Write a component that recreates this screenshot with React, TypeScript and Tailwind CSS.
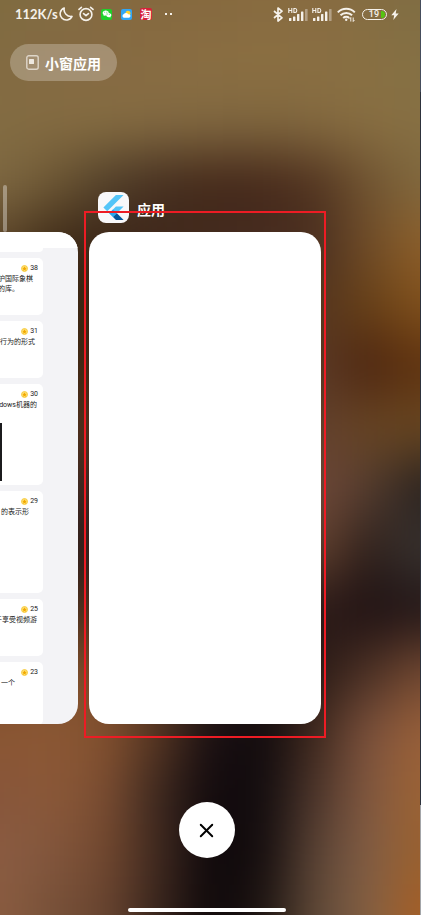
import React from "react";
import { X } from "lucide-react";
import { AiFillWechat } from "react-icons/ai";

const wallpaper: string[][] = [
  ["#7f6b40", "#826b42", "#846a40", "#85693f", "#86693f", "#876b40", "#886b41", "#856c42", "#7f6d43"],
  ["#836b42", "#846a43", "#866a43", "#886c42", "#8a6e42", "#8b6f42", "#8a6f42", "#887042", "#857044"],
  ["#836c42", "#846c42", "#866d42", "#846b42", "#826941", "#80673f", "#846a40", "#886e42", "#877043"],
  ["#7e6842", "#6d5734", "#52402a", "#452f20", "#432819", "#45281a", "#51331f", "#6f5331", "#80683e"],
  ["#5c4529", "#3e2b18", "#3c2618", "#40281b", "#432b1e", "#462c20", "#4a2f20", "#6f4c28", "#8d5f2a"],
  ["#4a3018", "#3c2612", "#38220f", "#3c261a", "#442c20", "#4c3024", "#55361f", "#674017", "#80501c"],
  ["#4a3018", "#442a14", "#3c2412", "#3c261a", "#442c20", "#503428", "#5c3a26", "#4c2510", "#5f320f"],
  ["#4a3018", "#4c2e1c", "#502f1b", "#4a2e20", "#4c3024", "#55382b", "#61402e", "#684523", "#6a4822"],
  ["#3c2820", "#3e2820", "#3c2620", "#402a20", "#4c3024", "#5c3e30", "#70493a", "#553d2f", "#28211f"],
  ["#2c1c18", "#2e1c1a", "#301e1a", "#302018", "#402a20", "#5c3e30", "#65432f", "#30211c", "#383330"],
  ["#402618", "#482c1c", "#4e301c", "#302018", "#302018", "#34201a", "#2b1a18", "#1f1113", "#221617"],
  ["#784828", "#80502e", "#774827", "#4c3020", "#302018", "#241816", "#2a1a16", "#4a3024", "#704731"],
  ["#8b5733", "#8b5834", "#84512f", "#573622", "#1a1013", "#100a0d", "#3f281d", "#7b513d", "#996039"],
  ["#87553a", "#8b5838", "#7b4d31", "#3c281f", "#120a0d", "#120c0e", "#4c352b", "#815840", "#9c6335"],
  ["#8a5c42", "#82563d", "#72482f", "#40291f", "#0e080b", "#140d0e", "#5a4335", "#815d45", "#99612f"],
  ["#8a5c40", "#765038", "#684430", "#38251d", "#0e080a", "#1e1512", "#5f4938", "#836044", "#a65f25"],
];

function Wallpaper() {
  const cw = 52.5;
  const ch = 61;
  return (
    <svg
      className="absolute inset-0 h-full w-full"
      viewBox="0 0 420 915"
      preserveAspectRatio="none"
      aria-hidden="true"
    >
      <defs>
        <filter
          id="soft"
          filterUnits="userSpaceOnUse"
          x="-120"
          y="-120"
          width="660"
          height="1155"
          colorInterpolationFilters="sRGB"
        >
          <feGaussianBlur stdDeviation="24 27" />
        </filter>
      </defs>
      <g filter="url(#soft)">
        {wallpaper.map((row, r) =>
          row.map((color, c) => {
            const x = c === 0 ? -120 : (c - 0.5) * cw;
            const y = r === 0 ? -120 : (r - 0.5) * ch;
            const right = c === row.length - 1 ? 540 : (c + 0.5) * cw + 1;
            const bottom = r === wallpaper.length - 1 ? 1035 : (r + 0.5) * ch + 1;
            return <rect key={`${r}-${c}`} x={x} y={y} width={right - x} height={bottom - y} fill={color} />;
          })
        )}
      </g>
    </svg>
  );
}

function Signal() {
  return (
    <svg className="h-[15px] w-[20px]" viewBox="0 0 20 15" fill="#f5f1ea" aria-hidden="true">
      <g fill="none" stroke="#f5f1ea" strokeWidth="1.1">
        <path d="M.8 1v5M3.8 1v5M.8 3.5h3M5.9 1.5h1.2q1.7 0 1.7 2t-1.7 2H5.9z" />
      </g>
      <rect x="1" y="11" width="2.400" height="3" rx=".6" />
      <rect x="5" y="9.500" width="2.400" height="4.500" rx=".6" />
      <rect x="9" y="7" width="2.400" height="7" rx=".6" />
      <rect x="13" y="4.500" width="2.400" height="9.500" rx=".6" />
      <rect x="17" y="2" width="2.600" height="12" rx=".6" opacity=".4" />
    </svg>
  );
}

function StatusBar() {
  return (
    <header className="flex h-7 items-center justify-between pr-[21px] pl-[15px] text-[#f5f1ea]">
      <div className="flex items-center">
        <span className="w-[41px] font-['Lato','Liberation_Sans',sans-serif] text-[13px] leading-5 font-bold whitespace-nowrap">
          112K/s
        </span>
        <svg className="ml-[3px] size-[14px]" viewBox="0 0 14 14" fill="none" stroke="currentColor" strokeWidth="1.6" strokeLinejoin="round" aria-hidden="true">
          <path d="M5.200 1A6.200 6.200 0 1 0 13 9.400 7 7 0 0 1 5.200 1z" />
        </svg>
        <svg className="ml-[5px] size-4" viewBox="0 0 16 16" fill="none" stroke="currentColor" strokeWidth="1.6" strokeLinecap="round" strokeLinejoin="round" aria-hidden="true">
          <circle cx="8" cy="8.500" r="5.900" />
          <path d="M1 3.400 3.400 1.300M15 3.400 12.600 1.300M5.600 7.600 8 9.600l2.400-2" />
        </svg>
        <span className="ml-[7px] flex size-[11px] items-center justify-center rounded-xs bg-[#1fd02a] text-white">
          <AiFillWechat size={10} />
        </span>
        <svg className="ml-[9px] size-[11px]" viewBox="0 0 11 11" aria-hidden="true">
          <rect width="11" height="11" rx="2" fill="#31a6f5" />
          <circle cx="7" cy="4.200" r="2.500" fill="#ffd22e" />
          <path d="M3 8.800a1.900 1.900 0 0 1-.1-3.700A2.500 2.500 0 0 1 7.200 5.200a1.800 1.800 0 0 1 .8 3.600z" fill="#fff" />
        </svg>
        <span className="ml-2 flex size-3 items-center justify-center rounded-xs bg-[#d6203a] font-['Noto_Sans_CJK_SC',sans-serif] text-[11px] leading-3 font-bold text-white">
          淘
        </span>
        <span className="ml-[13px] flex gap-[3px]">
          <i className="size-[2px] bg-[#f5f1ea]" />
          <i className="size-[2px] bg-[#f5f1ea]" />
        </span>
      </div>
      <div className="flex items-center">
        <svg className="h-[15px] w-[10px]" viewBox="0 0 10 15" fill="none" stroke="currentColor" strokeWidth="1.7" strokeLinejoin="round" aria-hidden="true">
          <path d="M1 4l8 6.800-4 3.200V1l4 3.200L1 11" />
        </svg>
        <span className="ml-[5px] flex gap-1">
          <Signal />
          <Signal />
        </span>
        <svg className="ml-[5px] h-[15px] w-[19px]" viewBox="0 0 19 15" fill="none" stroke="currentColor" strokeWidth="2" aria-hidden="true">
          <path d="M.8 5.400a12 12 0 0 1 17 0M3.500 8.300a8.200 8.200 0 0 1 11.600 0M6.200 11a4.400 4.400 0 0 1 6 0" />
          <circle cx="9.200" cy="12.800" r="1.200" fill="currentColor" stroke="none" />
          <path d="M13.800 14.500v-4l-1.200 1.500M16.200 10.500v4l1.200-1.500" strokeWidth="1" />
        </svg>
        <span className="ml-[6px] flex h-[11px] w-[25px] items-center justify-end gap-[2px] rounded-full border border-[#f5f1ea] pr-px">
          <span className="font-['Roboto',sans-serif] text-[9px] leading-[9px] font-medium">19</span>
          <i className="h-[7px] w-1 rounded-r-full bg-[#55c411]" />
        </span>
        <svg className="ml-1 h-[11px] w-2" viewBox="0 0 8 11" fill="currentColor" aria-hidden="true">
          <path d="M5.500 0 .3 6.200h2.900L2.300 11 7.700 4.600H4.700z" />
        </svg>
      </div>
    </header>
  );
}

const posts = [
  { stars: 38, text: "护国际象棋\n的库。", box: "h-[57px]", pad: "pr-2.5", image: false },
  { stars: 31, text: "行为的形式", box: "h-[57px]", pad: "pr-2", image: false },
  { stars: 30, text: "dows机器的", box: "h-[101px]", pad: "pr-1.5", image: true },
  { stars: 29, text: "的表示形", box: "h-[102px]", pad: "pr-3.5", image: false },
  { stars: 25, text: "于享受视频游", box: "h-[57px]", pad: "pr-1.5", image: false },
  { stars: 23, text: "一个", box: "h-[63px]", pad: "pr-7", image: false },
];

function FeedCard() {
  return (
    <article className="h-[492px] overflow-hidden rounded-r-[20px] bg-[#f3f3f6]">
      <div className="h-4 bg-white" />
      <div className="flex flex-col gap-[6px] pr-[35px]">
        <div className="h-1 rounded-br-[4px] bg-white" />
        {posts.map((p) => (
          <section key={p.stars} className={`${p.box} shrink-0 overflow-hidden rounded-r-[5px] bg-white pt-[5px] text-[#222]`}>
            <div className="flex h-[10px] items-center justify-end gap-[2px] pr-[5px] font-['Roboto',sans-serif] text-[7px] leading-[10px]">
              <svg className="size-[7px]" viewBox="0 0 7 7" aria-hidden="true">
                <circle cx="3.500" cy="3.500" r="3" fill="#ffe27a" stroke="#f5c52c" strokeWidth=".8" />
                <path d="M3.500 1.200 4.200 2.800 5.800 3 4.600 4.100 4.900 5.700 3.500 4.900 2.100 5.700 2.400 4.100 1.200 3 2.800 2.800z" fill="#f2a900" />
              </svg>
              {p.stars}
            </div>
            <div className={`${p.pad} mt-px flex justify-end`}>
              <p className="font-['Roboto','Noto_Sans_CJK_SC',sans-serif] text-[7px] leading-[10px] whitespace-pre">{p.text}</p>
            </div>
            {p.image && <div className="mt-[13px] h-[58px] w-[2px] bg-[#1b1b1d]" />}
          </section>
        ))}
      </div>
    </article>
  );
}

function FlutterIcon() {
  return (
    <span className="flex size-[31px] items-center justify-center rounded-lg bg-[#f8f8fa]">
      <svg className="size-[25px]" viewBox="0 0 24 24" aria-hidden="true">
        <path fill="#54c5f8" d="M14.314 0L2.300 12 6 15.700 21.684.013zM14.328 11.072L7.857 17.530l3.690 3.690 10.150-10.148z" />
        <path fill="#29a8ee" d="M7.857 17.530l3.690-3.680 3.690 3.680-3.690 3.690z" />
        <path fill="#01579b" d="M11.547 21.220l2.780 2.780H21.700l-6.460-6.468z" />
      </svg>
    </span>
  );
}

export default function App() {
  return (
    <div className="flex min-h-screen font-['Noto_Sans_CJK_SC',sans-serif]">
      <main className="relative min-w-0 flex-1 overflow-hidden">
        <Wallpaper />
        <div className="relative flex flex-col pb-[3px]">
          <StatusBar />
          <button
            type="button"
            className="mt-4 ml-[10px] flex h-[37px] w-[107px] items-center gap-[6px] rounded-full bg-white/25 pl-4 text-[14px] leading-5 font-bold whitespace-nowrap text-white"
          >
            <svg className="h-[15px] w-[13px]" viewBox="0 0 13 15" fill="none" aria-hidden="true">
              <rect x=".8" y=".8" width="11.400" height="13.400" rx="2" stroke="#ded6c9" strokeWidth="1.4" />
              <rect x="3" y="4" width="5" height="5" rx=".5" fill="#ede8e0" />
            </svg>
            小窗应用
          </button>

          <div className="mt-[104px] grid grid-cols-[78fr_232fr_88fr] items-end gap-x-[11px]">
            <div className="min-w-0">
              <div className="ml-[3px] h-[47px] w-1 rounded-full bg-white/35" />
              <FeedCard />
            </div>
            <div>
              <div className="mb-[9px] flex h-[31px] items-center gap-2 pl-[9px] text-[14px] leading-5 font-bold text-white">
                <FlutterIcon />
                <h1 className="pt-[2px]">应用</h1>
              </div>
              <div className="relative">
                <article aria-label="应用" className="h-[492px] rounded-[20px] bg-white" />
                <div className="pointer-events-none absolute -inset-x-[5px] -top-[21px] -bottom-[14px] border-2 border-[#ed1c24]" />
              </div>
            </div>
          </div>

          <div className="mt-[78px] flex flex-col items-center gap-[50px] pr-[7px]">
            <button type="button" aria-label="关闭" className="flex size-14 items-center justify-center rounded-full bg-white text-black">
              <X size={23} strokeWidth={2} />
            </button>
            <div className="h-1 w-[158px] rounded-full bg-white" />
          </div>
        </div>
      </main>
      <div className="flex w-px flex-col">
        <div className="basis-[10%] bg-[#454d5c]" />
        <div className="flex-1 bg-[#2d323c]" />
        <div className="basis-[12%] bg-[#a3a5a8]" />
      </div>
    </div>
  );
}
